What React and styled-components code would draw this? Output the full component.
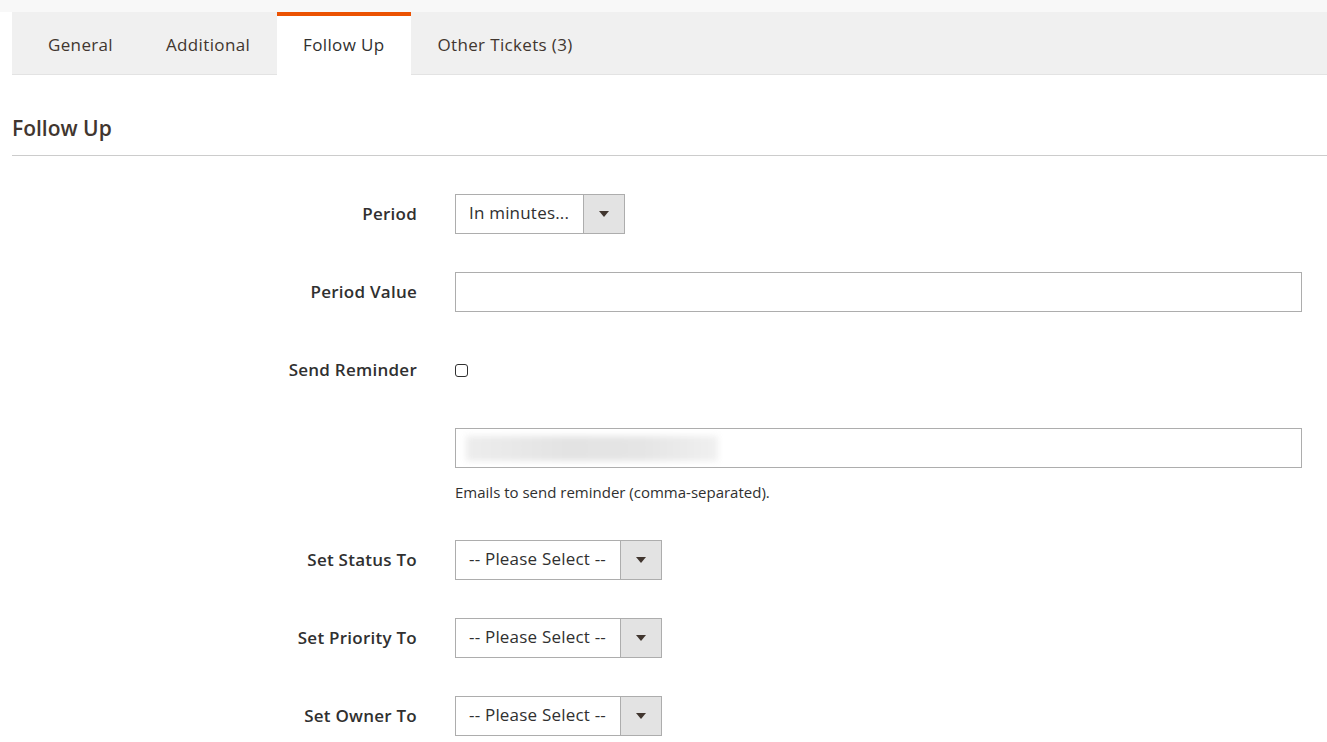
import React from 'react'
import styled, { createGlobalStyle } from 'styled-components'

const GlobalStyle = createGlobalStyle`
    body{
        margin: 0;
        background: #ffffff;
        font-family: "Open Sans", "Noto Sans", sans-serif;
        color: #303030;
    }
`;

const tabs = ['General', 'Additional', 'Follow Up', 'Other Tickets (3)'];

function Select({ value, width }) {
    return (
        <SelectStyled $width={width}>
            <span className="value">{value}</span>
            <span className="arrow"><i /></span>
        </SelectStyled>
    )
}

function Field({ label, children }) {
    return (
        <Row>
            <Label>{label}</Label>
            <Control>{children}</Control>
        </Row>
    )
}

function App() {
    return (
        <>
            <GlobalStyle />
            <TopStrip />
            <Page>
                <TabBar>
                    {tabs.map((t) => (
                        <Tab key={t} $active={t === 'Follow Up'}>{t}</Tab>
                    ))}
                </TabBar>
                <Heading>Follow Up</Heading>
                <Fieldset>
                    <Field label="Period">
                        <Select value="In minutes..." width={170} />
                    </Field>
                    <Field label="Period Value">
                        <Input />
                    </Field>
                    <Field label="Send Reminder">
                        <Checkbox />
                    </Field>
                    <Field label="">
                        <Input>
                            <Blurred />
                        </Input>
                        <Note>Emails to send reminder (comma-separated).</Note>
                    </Field>
                    <Field label="Set Status To">
                        <Select value="-- Please Select --" width={207} />
                    </Field>
                    <Field label="Set Priority To">
                        <Select value="-- Please Select --" width={207} />
                    </Field>
                    <Field label="Set Owner To">
                        <Select value="-- Please Select --" width={207} />
                    </Field>
                </Fieldset>
            </Page>
        </>
    )
}

const TopStrip = styled.div`
    height: 12px;
    background-color: #f8f8f8;
`;

const Page = styled.div`
    padding-left: 12px;
`;

const TabBar = styled.div`
    display: flex;
    height: 62px;
    padding-left: 10px;
    background-color: #f0f0f0;
    border-bottom: 1px solid #e3e3e3;
`;

const Tab = styled.div`
    display: flex;
    align-items: center;
    padding: 0 27px 3px 26px;
    font-size: 17px;
    letter-spacing: 0.35px;
    color: ${(p) => (p.$active ? '#303030' : '#41362f')};
    background-color: ${(p) => (p.$active ? '#ffffff' : 'transparent')};
    border-top: 4px solid ${(p) => (p.$active ? '#eb5202' : 'transparent')};
    height: 56px;
    margin-bottom: -1px;
`;

const Heading = styled.h2`
    margin: 0;
    padding: 41px 0 15px 0;
    font-size: 21px;
    font-weight: 600;
    line-height: 24px;
    color: #41362f;
    border-bottom: 1px solid #cccccc;
`;

const Fieldset = styled.div`
    padding-top: 38px;
`;

const Row = styled.div`
    display: grid;
    grid-template-columns: 405px 1fr;
    column-gap: 38px;
    align-items: start;
    margin-bottom: 38px;
    padding-right: 25px;
`;

const Label = styled.label`
    text-align: right;
    font-size: 17px;
    font-weight: 600;
    letter-spacing: 0.25px;
    color: #303030;
    line-height: 40px;
`;

const Control = styled.div`
    min-height: 40px;
    display: flex;
    flex-direction: column;
    justify-content: center;
`;

const Input = styled.div`
    box-sizing: border-box;
    height: 40px;
    border: 1px solid #adadad;
    background: #ffffff;
    display: flex;
    align-items: center;
    padding: 0 10px;
`;

const Blurred = styled.span`
    display: block;
    width: 252px;
    height: 25px;
    background: linear-gradient(90deg, #ededed, #e3e3e3 40%, #e5e5e5 70%, #f0f0f0);
    filter: blur(3px);
`;

const Note = styled.div`
    margin-top: 14px;
    font-size: 15px;
    line-height: 20px;
    color: #303030;
`;

const Checkbox = styled.span`
    display: block;
    width: 11px;
    height: 11px;
    border: 1px solid #303030;
    border-radius: 3px;
    background: #ffffff;
`;

const SelectStyled = styled.div`
    box-sizing: border-box;
    width: ${(p) => p.$width}px;
    height: 40px;
    border: 1px solid #adadad;
    display: flex;
    background: #ffffff;
    .value{
        flex: 1;
        display: flex;
        align-items: center;
        padding: 0 0 3px 13px;
        font-size: 17px;
        letter-spacing: 0.2px;
        color: #303030;
        white-space: nowrap;
        overflow: hidden;
    }
    .arrow{
        width: 40px;
        border-left: 1px solid #adadad;
        background-color: #e3e3e3;
        display: flex;
        align-items: center;
        justify-content: center;
        i{
            width: 0;
            height: 0;
            border-left: 5px solid transparent;
            border-right: 5px solid transparent;
            border-top: 6px solid #41362f;
        }
    }
`;

export default App;
